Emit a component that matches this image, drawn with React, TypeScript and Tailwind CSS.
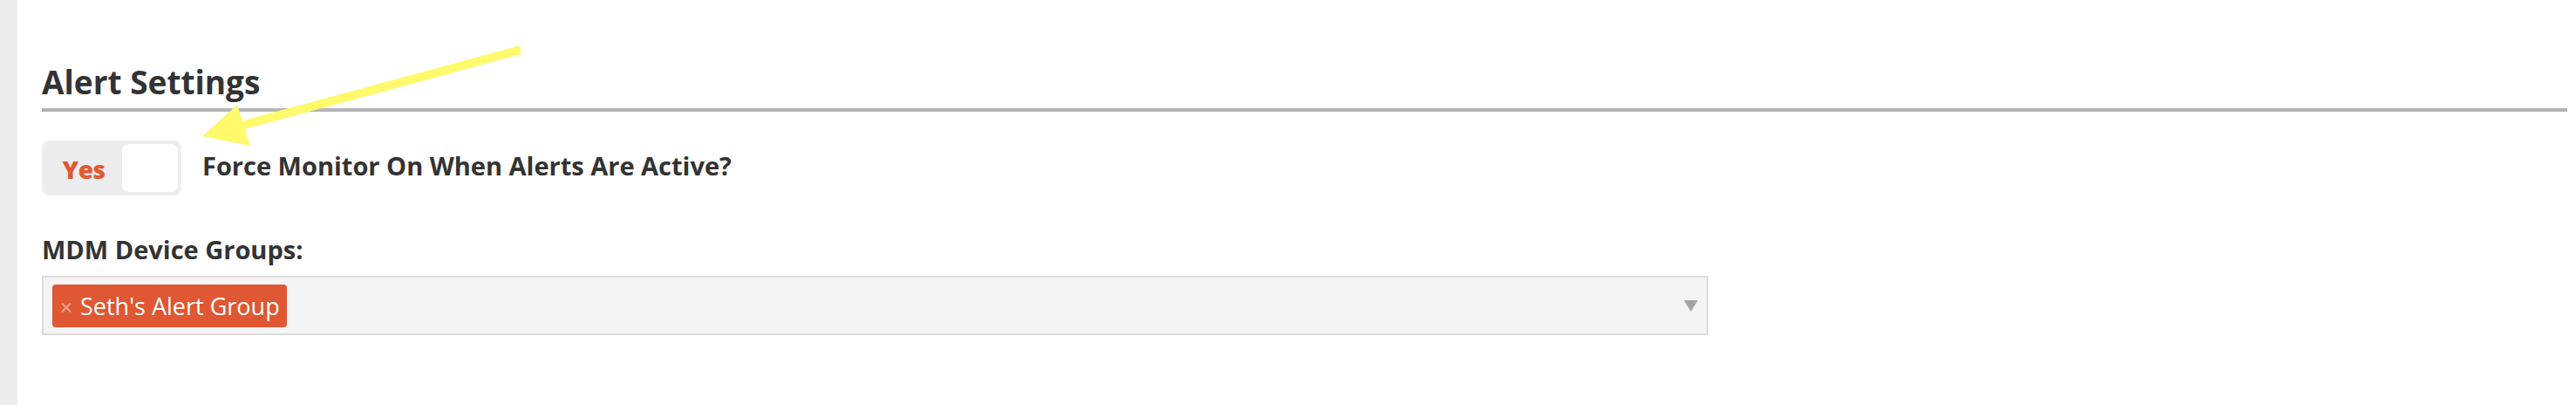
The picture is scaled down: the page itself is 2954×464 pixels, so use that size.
import React from "react";

export default function App() {
  return (
    <div
      className="relative flex h-[464px] w-[2954px] overflow-hidden bg-white text-[#333333]"
      style={{ fontFamily: "'Open Sans', Lato, sans-serif" }}
    >
      <div className="w-[20px] shrink-0 bg-[#ebecee]" />
      <div className="flex flex-1 flex-col pl-[28px] pr-[10px] pt-[70px]">
        <div className="border-b-4 border-[#b4b4b4] pb-[6px]">
          <h2 className="text-[37px] font-bold leading-[48px]">Alert Settings</h2>
        </div>

        <div className="mt-[33px] flex items-center gap-[24px]">
          <div className="flex h-[63px] w-[160px] items-center rounded-[8px] border-2 border-[#eeeff1] bg-[#ebecee] p-[2px]">
            <span className="flex flex-1 items-center justify-center pt-[2px] text-[28px] font-extrabold leading-none tracking-[-0.5px] text-[#e05a33]">
              Yes
            </span>
            <div className="h-full w-[64px] rounded-[8px] bg-white" />
          </div>
          <span className="pb-[6px] text-[29px] font-bold leading-none">
            Force Monitor On When Alerts Are Active?
          </span>
        </div>

        <label className="mt-[44px] text-[29px] font-bold leading-[36px]">MDM Device Groups:</label>

        <div className="mt-[12px] flex h-[68px] w-[1911px] items-center border-2 border-[#dcdcdc] bg-[#f4f4f4] pl-[10px] pr-[10px]">
          <span className="flex h-[49px] items-center rounded-[4px] bg-[#df5733] pl-[10px] pr-[8px] text-[27px] leading-none text-white">
            <svg className="mr-[10px] mt-[4px]" width="12" height="11" viewBox="0 0 12 11">
              <path d="M1 0.5 L11 10.5 M11 0.5 L1 10.5" stroke="#f1a08d" strokeWidth="2" />
            </svg>
            Seth's Alert Group
          </span>
          <svg className="ml-auto" width="16" height="13" viewBox="0 0 16 13">
            <polygon points="0,0 16,0 8,13" fill="#a3a3a3" />
          </svg>
        </div>
      </div>

      <svg
        className="pointer-events-none absolute left-0 top-0"
        width="2954"
        height="464"
        viewBox="0 0 2954 464"
      >
        <line x1="597" y1="57" x2="278" y2="143.5" stroke="#fff96c" strokeWidth="10" />
        <polygon points="232,156 272,120 287,167" fill="#fff96c" />
      </svg>
    </div>
  );
}
